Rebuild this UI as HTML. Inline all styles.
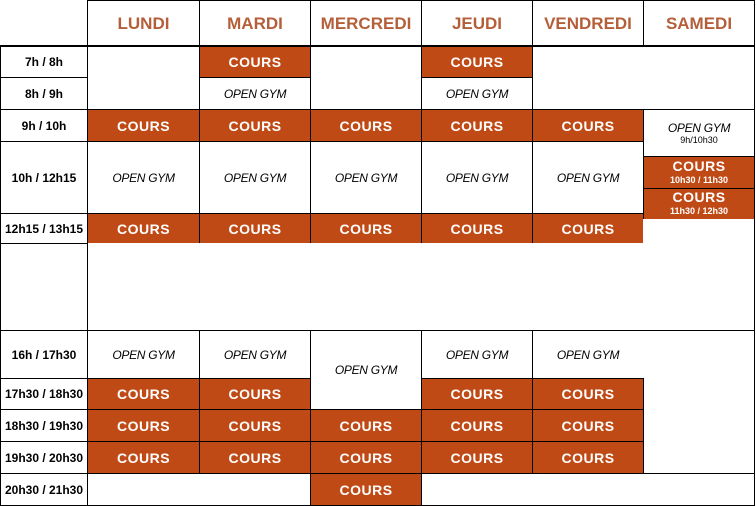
<!DOCTYPE html><html><head><style>
body{margin:0;width:756px;height:506px;background:#fff;position:relative;overflow:hidden;font-family:"Liberation Sans",sans-serif}
.c{position:absolute;box-sizing:border-box;border:1px solid #000;display:flex;flex-direction:column;align-items:center;justify-content:center;text-align:center;background:#fff}
.o{background:#c04a16;color:#fff;font-weight:bold;font-size:14px;letter-spacing:.5px}
.g{font-style:italic;font-size:12px;color:#000;letter-spacing:-.3px}
.h{color:#b55f3a;font-weight:bold;font-size:17px}
.l{font-weight:bold;font-size:12px}
.s{font-size:9px;font-weight:bold;letter-spacing:0}
</style></head><body>
<!-- header -->
<div class="c h" style="left:87px;top:0;width:113px;height:47px">LUNDI</div>
<div class="c h" style="left:199px;top:0;width:112px;height:47px">MARDI</div>
<div class="c h" style="left:310px;top:0;width:112px;height:47px">MERCREDI</div>
<div class="c h" style="left:421px;top:0;width:112px;height:47px">JEUDI</div>
<div class="c h" style="left:532px;top:0;width:112px;height:47px">VENDREDI</div>
<div class="c h" style="left:643px;top:0;width:112px;height:47px">SAMEDI</div>
<div style="position:absolute;left:0;top:45px;width:755px;height:2px;background:#000;z-index:5"></div>
<!-- labels -->
<div class="c l" style="left:0;top:45px;width:88px;height:33px">7h / 8h</div>
<div class="c l" style="left:0;top:77px;width:88px;height:33px">8h / 9h</div>
<div class="c l" style="left:0;top:109px;width:88px;height:33px">9h / 10h</div>
<div class="c l" style="left:0;top:141px;width:88px;height:73px">10h / 12h15</div>
<div class="c l" style="left:0;top:213px;width:88px;height:31px">12h15 / 13h15</div>
<div class="c l" style="left:0;top:243px;width:88px;height:88px"></div>
<div class="c l" style="left:0;top:330px;width:88px;height:49px">16h / 17h30</div>
<div class="c l" style="left:0;top:378px;width:88px;height:32px">17h30 / 18h30</div>
<div class="c l" style="left:0;top:409px;width:88px;height:33px">18h30 / 19h30</div>
<div class="c l" style="left:0;top:441px;width:88px;height:33px">19h30 / 20h30</div>
<div class="c l" style="left:0;top:473px;width:88px;height:33px">20h30 / 21h30</div>
<!-- 7-9 -->
<div class="c" style="left:87px;top:45px;width:113px;height:65px"></div>
<div class="c o" style="left:199px;top:45px;width:112px;height:33px">COURS</div>
<div class="c g" style="left:199px;top:77px;width:112px;height:33px">OPEN GYM</div>
<div class="c" style="left:310px;top:45px;width:112px;height:65px"></div>
<div class="c o" style="left:421px;top:45px;width:112px;height:33px">COURS</div>
<div class="c g" style="left:421px;top:77px;width:112px;height:33px">OPEN GYM</div>
<div class="c" style="left:532px;top:45px;width:223px;height:65px"></div>
<!-- 9h -->
<div class="c o" style="left:87px;top:109px;width:113px;height:33px">COURS</div>
<div class="c o" style="left:199px;top:109px;width:112px;height:33px">COURS</div>
<div class="c o" style="left:310px;top:109px;width:112px;height:33px">COURS</div>
<div class="c o" style="left:421px;top:109px;width:112px;height:33px">COURS</div>
<div class="c o" style="left:532px;top:109px;width:112px;height:33px">COURS</div>
<div class="c g" style="left:643px;top:109px;width:112px;height:48px">OPEN GYM<span class="s" style="font-style:normal;font-weight:normal">9h/10h30</span></div>
<!-- 10h -->
<div class="c g" style="left:87px;top:141px;width:113px;height:73px">OPEN GYM</div>
<div class="c g" style="left:199px;top:141px;width:112px;height:73px">OPEN GYM</div>
<div class="c g" style="left:310px;top:141px;width:112px;height:73px">OPEN GYM</div>
<div class="c g" style="left:421px;top:141px;width:112px;height:73px">OPEN GYM</div>
<div class="c g" style="left:532px;top:141px;width:112px;height:73px">OPEN GYM</div>
<div class="c o" style="left:643px;top:156px;width:112px;height:33px;line-height:14px">COURS<span class="s">10h30 / 11h30</span></div>
<div class="c o" style="left:643px;top:188px;width:112px;height:32px;line-height:14px">COURS<span class="s">11h30 / 12h30</span></div>
<!-- 12h15 -->
<div class="c o" style="left:87px;top:213px;width:113px;height:31px">COURS</div>
<div class="c o" style="left:199px;top:213px;width:112px;height:31px">COURS</div>
<div class="c o" style="left:310px;top:213px;width:112px;height:31px">COURS</div>
<div class="c o" style="left:421px;top:213px;width:112px;height:31px">COURS</div>
<div class="c o" style="left:532px;top:213px;width:112px;height:31px">COURS</div>
<div class="c" style="left:643px;top:219px;width:112px;height:112px;border-left:none;border-top:none"></div>
<div class="c" style="left:87px;top:243px;width:557px;height:88px;border-top:none;border-right:none"></div>
<!-- 16h -->
<div class="c g" style="left:87px;top:330px;width:113px;height:49px">OPEN GYM</div>
<div class="c g" style="left:199px;top:330px;width:112px;height:49px">OPEN GYM</div>
<div class="c g" style="left:310px;top:330px;width:112px;height:80px">OPEN GYM</div>
<div class="c g" style="left:421px;top:330px;width:112px;height:49px">OPEN GYM</div>
<div class="c g" style="left:532px;top:330px;width:112px;height:49px">OPEN GYM</div>
<div class="c" style="left:643px;top:330px;width:112px;height:144px;border-left:none"></div>
<!-- 17h30 -->
<div class="c o" style="left:87px;top:378px;width:113px;height:32px">COURS</div>
<div class="c o" style="left:199px;top:378px;width:112px;height:32px">COURS</div>
<div class="c o" style="left:421px;top:378px;width:112px;height:32px">COURS</div>
<div class="c o" style="left:532px;top:378px;width:112px;height:32px">COURS</div>
<!-- 18h30 -->
<div class="c o" style="left:87px;top:409px;width:113px;height:33px">COURS</div>
<div class="c o" style="left:199px;top:409px;width:112px;height:33px">COURS</div>
<div class="c o" style="left:310px;top:409px;width:112px;height:33px">COURS</div>
<div class="c o" style="left:421px;top:409px;width:112px;height:33px">COURS</div>
<div class="c o" style="left:532px;top:409px;width:112px;height:33px">COURS</div>
<!-- 19h30 -->
<div class="c o" style="left:87px;top:441px;width:113px;height:33px">COURS</div>
<div class="c o" style="left:199px;top:441px;width:112px;height:33px">COURS</div>
<div class="c o" style="left:310px;top:441px;width:112px;height:33px">COURS</div>
<div class="c o" style="left:421px;top:441px;width:112px;height:33px">COURS</div>
<div class="c o" style="left:532px;top:441px;width:112px;height:33px">COURS</div>
<!-- 20h30 -->
<div class="c" style="left:87px;top:473px;width:224px;height:33px"></div>
<div class="c o" style="left:310px;top:473px;width:112px;height:33px">COURS</div>
<div class="c" style="left:421px;top:473px;width:334px;height:33px"></div>
</body></html>
